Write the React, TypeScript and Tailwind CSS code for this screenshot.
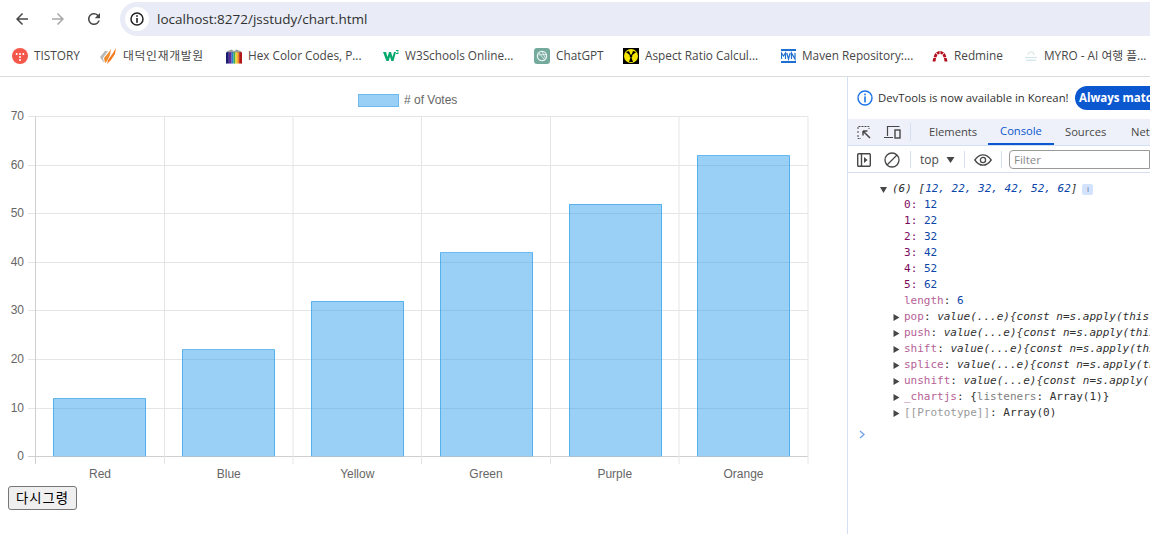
import React from 'react';

const ui = "font-['Open_Sans','Noto_Sans_CJK_KR',sans-serif]";

const NavIcon = ({ d, color }: { d: string; color: string }) => (
  <svg width="18" height="18" viewBox="0 0 24 24" fill={color}>
    <path d={d} />
  </svg>
);

const Tistory = () => (
  <svg width="16" height="16" viewBox="0 0 16 16">
    <circle cx="8" cy="8" r="8" fill="#f4584a" />
    <circle cx="4.7" cy="6" r="1" fill="#fff" />
    <circle cx="8" cy="6" r="1" fill="#fff" />
    <circle cx="11.3" cy="6" r="1" fill="#fff" />
    <circle cx="8" cy="9" r="1" fill="#fff" />
    <circle cx="8" cy="12" r="1" fill="#fff" />
  </svg>
);

const Daedeok = () => (
  <svg width="17" height="16" viewBox="0 0 17 16">
    <path d="M0 9 L5 3 L8 3 L3 10 L4 15 Z" fill="#b8b8b8" />
    <path d="M4 10 L9 4 L11 1 L10 7 L7 13 L5 15 Z" fill="#f08a2c" />
    <path d="M8 12 L13 5 L16 0 L15 6 L11 12 L7 16 Z" fill="#f47b20" />
  </svg>
);

const HexBook = () => (
  <svg width="16" height="17" viewBox="0 0 17 17">
    <path d="M1 3 L6 1 L8.5 3 L11 1 L16 3 L16 5 L1 5 Z" fill="#9aa0a0" />
    <rect x="0" y="4" width="3" height="12" fill="#1a1a6e" />
    <rect x="3" y="4" width="3" height="12" fill="#5b2a9d" />
    <rect x="6" y="4" width="2" height="12" fill="#2a7fd0" />
    <rect x="8" y="4" width="2" height="12" fill="#3cae4a" />
    <rect x="10" y="4" width="2" height="12" fill="#f2d32c" />
    <rect x="12" y="4" width="2" height="12" fill="#f08a24" />
    <rect x="14" y="4" width="3" height="12" fill="#b01818" />
  </svg>
);

const W3 = () => (
  <svg width="16" height="16" viewBox="0 0 16 16">
    <path d="M0 4 L3 4 L4.5 9 L6 4 L8 4 L9.5 9 L11 4 L13 4 L10.5 13 L8.3 13 L7 8.5 L5.7 13 L3.4 13 Z" fill="#04aa6d" />
    <rect x="13" y="2" width="2.5" height="1" fill="#04aa6d" />
    <rect x="14" y="3.5" width="1.5" height="1" fill="#04aa6d" />
    <rect x="13" y="5" width="2.5" height="1" fill="#04aa6d" />
  </svg>
);

const Gpt = () => (
  <svg width="16" height="16" viewBox="0 0 16 16">
    <rect width="16" height="16" rx="3" fill="#74aa9c" />
    <circle cx="8" cy="8" r="4.6" fill="none" stroke="#fff" strokeOpacity="0.85" strokeWidth="1.3" />
    <path d="M8 3.4 L11.5 10.5 M12.4 6.5 L4.6 6.8 M10.8 12 L5 5" stroke="#fff" strokeOpacity="0.7" strokeWidth="1" />
  </svg>
);

const Aspect = () => (
  <svg width="16" height="16" viewBox="0 0 16 16">
    <rect width="16" height="16" fill="#000" />
    <circle cx="8" cy="8" r="7" fill="#f6e500" />
    <circle cx="8" cy="8" r="1.4" fill="#000" />
    <path d="M8 8 L2.8 4 L6 3 Z M8 8 L13.2 4 L10 3 Z M8 8 L6 14 L10 14 Z" fill="#000" />
  </svg>
);

const Mvn = () => (
  <svg width="15" height="16" viewBox="0 0 15 16">
    <rect y="1" width="15" height="2" fill="#1f6fd0" />
    <rect y="13" width="15" height="2" fill="#1f6fd0" />
    <path d="M0.5 11 V5 L2.5 8 L4.5 5 V11 M5.8 5 L7.5 11 L9.2 5 M10.5 11 V5 L14 11 V5" fill="none" stroke="#1f6fd0" strokeWidth="1.2" />
  </svg>
);

const Redmine = () => (
  <svg width="16" height="16" viewBox="0 0 16 16">
    <path d="M0.5 13.5 H3.5 L4 10 H1.3 Z M1.6 9 L4.3 9.6 L5.5 7 L3.2 5 Z M4 4.4 L6 6.4 L7.6 6 V2.8 Z M8.4 2.8 V6 L10 6.4 L12 4.4 Z M12.8 5 L10.5 7 L11.7 9.6 L14.4 9 Z M14.7 10 H12 L12.5 13.5 H15.5 Z" fill="#b3101c" />
  </svg>
);

const Myro = () => (
  <svg width="14" height="14" viewBox="0 0 14 14">
    <path d="M4 6 A3 3 0 0 1 10 6" fill="none" stroke="#d8e6e4" strokeWidth="1.2" />
    <rect x="1" y="8" width="12" height="1" fill="#cfe4ea" />
    <rect x="2" y="10.5" width="10" height="1.5" fill="#d8e8ee" />
  </svg>
);

const bookmarks = [
  { icon: <Tistory />, label: 'TISTORY', box: 'ml-3 w-[88px]', text: '' },
  { icon: <Daedeok />, label: '대덕인재개발원', box: 'w-[126px]', text: 'tracking-[0.7px]' },
  { icon: <HexBook />, label: 'Hex Color Codes, P...', box: 'w-[157px]', text: '' },
  { icon: <W3 />, label: 'W3Schools Online...', box: 'w-[151px]', text: '' },
  { icon: <Gpt />, label: 'ChatGPT', box: 'w-[89px]', text: '' },
  { icon: <Aspect />, label: 'Aspect Ratio Calcul...', box: 'w-[158px]', text: '' },
  { icon: <Mvn />, label: 'Maven Repository:...', box: 'w-[151px]', text: '' },
  { icon: <Redmine />, label: 'Redmine', box: 'w-[92px]', text: '' },
  { icon: <Myro />, label: 'MYRO - AI 여행 플...', box: 'w-[126px]', text: '' },
];

const values = [12, 22, 32, 42, 52, 62];
const names = ['Red', 'Blue', 'Yellow', 'Green', 'Purple', 'Orange'];
const ticks = [0, 10, 20, 30, 40, 50, 60, 70];
const gridX = [35.5, 164.5, 293, 421.5, 550.5, 679, 808];
const barX = [53, 182, 311, 440, 569, 697];
const yOf = (v: number) => 456.7 - v * 4.857;

const Chart = () => (
  <svg width="847" height="408" viewBox="0 77 847 408" className="block font-['Liberation_Sans',sans-serif] text-[12px]">
    <rect x="358.5" y="94.5" width="40" height="12" fill="#9ad0f5" stroke="#6cbaf0" />
    <text x="404" y="104" fill="#666">
      # of Votes
    </text>
    {ticks.map((t) => (
      <g key={t}>
        <line x1="28" x2="808" y1={Math.floor(yOf(t)) + 0.5} y2={Math.floor(yOf(t)) + 0.5} stroke={t === 0 ? '#cfcfcf' : '#e5e5e5'} />
        <text x="24" y={yOf(t) + 3.5} textAnchor="end" fill="#666">
          {t}
        </text>
      </g>
    ))}
    {gridX.map((x, i) => (
      <line key={x} x1={x} x2={x} y1="116.5" y2="464" stroke={i === 0 ? '#cfcfcf' : '#e5e5e5'} />
    ))}
    {values.map((v, i) => (
      <g key={names[i]}>
        <rect x={barX[i]} y={yOf(v)} width="93" height={456.5 - yOf(v)} fill="rgba(54,162,235,0.5)" />
        <path
          d={`M${barX[i] + 0.5} 456 V${Math.floor(yOf(v)) + 0.5} H${barX[i] + 92.5} V456`}
          fill="none"
          stroke="rgba(54,162,235,0.7)"
        />
        <text x={(gridX[i] + gridX[i + 1]) / 2} y="478" textAnchor="middle" fill="#666">
          {names[i]}
        </text>
      </g>
    ))}
  </svg>
);

const Arrow = ({ open }: { open?: boolean }) => (
  <svg width="7" height="7" viewBox="0 0 7 7" className="shrink-0">
    <path d={open ? 'M0 1 H7 L3.5 7 Z' : 'M0.5 0 L6.5 3.5 L0.5 7 Z'} fill="#474747" />
  </svg>
);

const Row = ({ k, v }: { k: string; v: number }) => (
  <div className="h-4 pl-[56px] leading-4">
    <span className="text-[#7c0a5c]">{k}: </span>
    <span className="text-[#0b46a8]">{v}</span>
  </div>
);

const FnRow = ({ k }: { k: string }) => (
  <div className="flex h-4 items-center pl-[45px] leading-4">
    <Arrow />
    <span className="ml-1 shrink-0">
      <span className="text-[#b65f96]">{k}</span>
      <span className="text-[#303030]">: </span>
      <span className="italic text-[#303030]">value(...e){'{'}const n=s.apply(this,arguments);</span>
    </span>
  </div>
);

const DevTools = () => (
  <div className={`h-full w-[303px] overflow-hidden whitespace-nowrap border-l border-[#d3e0f3] ${ui}`}>
    <div className="flex h-[42px] items-center pl-[9px]">
      <svg width="16" height="16" viewBox="0 0 16 16" className="shrink-0">
        <circle cx="8" cy="8" r="7" fill="none" stroke="#1a73e8" strokeWidth="1.4" />
        <rect x="7.2" y="3.6" width="1.6" height="1.7" fill="#1a73e8" />
        <rect x="7.2" y="6.4" width="1.6" height="6" fill="#1a73e8" />
      </svg>
      <span className="ml-[5px] w-[192px] shrink-0 text-[11.3px] text-[#303030]">DevTools is now available in Korean!</span>
      <div className="ml-[5px] flex h-6 w-[90px] shrink-0 items-center rounded-l-full bg-[#0b57d0] pl-1 text-[11.5px] font-bold text-white">
        Always match
      </div>
    </div>
    <div className="flex h-[27px] items-stretch border-b border-[#d3e0f3] bg-[#eef1f9] pl-[9px] text-[11.2px] text-[#474747]">
      <div className="flex shrink-0 items-center gap-[12px]">
        <svg width="15" height="15" viewBox="0 0 15 15" fill="none" stroke="#474747">
          <path d="M1 4 V1.5 H12 V4 M1 6 V8 M1 10 V13.5 H4" strokeDasharray="2 1" />
          <path d="M6 6 L13 13 M6 6 H10.5 M6 6 V10.5" strokeWidth="1.5" />
        </svg>
        <svg width="17" height="15" viewBox="0 0 17 15" fill="none" stroke="#474747">
          <path d="M3.5 11 V1.5 H15.5 M0 12.5 H9" strokeWidth="1.2" />
          <rect x="11" y="5" width="5" height="8" strokeWidth="1.4" />
        </svg>
      </div>
      <div className="my-1 ml-[9px] w-px shrink-0 bg-[#d3e0f3]" />
      <div className="ml-[18px] flex w-[59px] shrink-0 items-center">Elements</div>
      <div className="flex w-[66px] shrink-0 items-center justify-center border-b-2 border-[#0b57d0] text-[#0b57d0]">Console</div>
      <div className="ml-[11px] flex w-[66px] shrink-0 items-center">Sources</div>
      <div className="flex shrink-0 items-center">Network</div>
    </div>
    <div className="flex h-[27px] items-center border-b border-[#d3e0f3] pl-[9px] pt-px text-[12px] text-[#474747]">
      <svg width="14" height="14" viewBox="0 0 14 14" fill="none" stroke="#474747" strokeWidth="1.4" className="shrink-0">
        <rect x="0.7" y="0.7" width="12.6" height="12.6" rx="1" />
        <path d="M4.5 1 V13" />
        <path d="M7 4 L10.5 7 L7 10 Z" fill="#474747" stroke="none" />
      </svg>
      <svg width="16" height="16" viewBox="0 0 16 16" fill="none" stroke="#474747" strokeWidth="1.3" className="ml-[13px] shrink-0">
        <circle cx="8" cy="8" r="7" />
        <path d="M3 13 L13 3" />
      </svg>
      <div className="ml-[10px] h-[17px] w-px shrink-0 bg-[#d3e0f3]" />
      <span className="ml-[9px] w-[18px] shrink-0">top</span>
      <svg width="9" height="6" viewBox="0 0 9 6" className="ml-[8px] shrink-0">
        <path d="M0.5 0 H8.5 L4.5 6 Z" fill="#474747" />
      </svg>
      <div className="ml-[9px] h-[17px] w-px shrink-0 bg-[#d3e0f3]" />
      <svg width="18" height="12" viewBox="0 0 18 12" fill="none" stroke="#474747" strokeWidth="1.3" className="ml-[9px] shrink-0">
        <path d="M0.8 6 C4 1.5 6.5 0.8 9 0.8 C11.5 0.8 14 1.5 17.2 6 C14 10.5 11.5 11.2 9 11.2 C6.5 11.2 4 10.5 0.8 6 Z" />
        <circle cx="9" cy="6" r="2.6" />
      </svg>
      <div className="ml-[9px] h-[17px] w-px shrink-0 bg-[#d3e0f3]" />
      <div className="ml-[7px] flex h-[19px] flex-1 items-center rounded-l-[4px] border border-[#9a9a9a] pl-1 text-[11.5px] text-[#8a8a8a]">Filter</div>
    </div>
    <div className="pt-2 font-['DejaVu_Sans_Mono',monospace] text-[11px]">
      <div className="flex h-4 items-center pl-[32px] leading-4">
        <Arrow open />
        <span className="ml-[5px] shrink-0 italic text-[#303030]">
          (6) [<span className="text-[#0b46a8]">12, 22, 32, 42, 52, 62</span>]
        </span>
        <span className={`ml-[5px] flex h-[11px] w-[11px] shrink-0 items-center justify-center rounded-[2px] bg-[#d3e3fd] text-[8px] text-[#5a6a8a] ${ui}`}>i</span>
      </div>
      {values.map((v, i) => (
        <Row key={i} k={String(i)} v={v} />
      ))}
      <div className="h-4 pl-[56px] leading-4">
        <span className="text-[#b65f96]">length</span>
        <span className="text-[#303030]">: </span>
        <span className="text-[#0b46a8]">6</span>
      </div>
      {['pop', 'push', 'shift', 'splice', 'unshift'].map((k) => (
        <FnRow key={k} k={k} />
      ))}
      <div className="flex h-4 items-center pl-[45px] leading-4">
        <Arrow />
        <span className="ml-1 shrink-0 text-[#303030]">
          <span className="text-[#b65f96]">_chartjs</span>: {'{'}<span className="text-[#808080]">listeners</span>: Array(1){'}'}
        </span>
      </div>
      <div className="flex h-4 items-center pl-[45px] leading-4">
        <Arrow />
        <span className="ml-1 shrink-0 text-[#303030]">
          <span className="text-[#9a9a9a]">[[Prototype]]</span>: Array(0)
        </span>
      </div>
      <div className="pl-[11px] pt-[9px]">
        <svg width="7" height="9" viewBox="0 0 7 9" fill="none" stroke="#6f9fe8" strokeWidth="1.3">
          <path d="M1 1 L5 4.5 L1 8" />
        </svg>
      </div>
    </div>
  </div>
);

export default function App() {
  return (
    <div className="flex h-[534px] w-[1150px] flex-col overflow-hidden bg-white">
      <div className="flex h-9 items-end">
        <div className="flex h-[34px] w-[120px] items-center pl-[13px]">
          <NavIcon color="#474747" d="M20 11H7.83l5.59-5.59L12 4l-8 8 8 8 1.41-1.41L7.83 13H20v-2z" />
          <div className="ml-[18px]">
            <NavIcon color="#a8a8a8" d="M4 11h12.17l-5.59-5.59L12 4l8 8-8 8-1.41-1.41L16.17 13H4v-2z" />
          </div>
          <div className="ml-[18px]">
            <NavIcon
              color="#474747"
              d="M17.65 6.35A7.958 7.958 0 0 0 12 4c-4.42 0-7.99 3.58-7.99 8s3.57 8 7.99 8c3.73 0 6.84-2.55 7.73-6h-2.08A5.99 5.99 0 0 1 12 18c-3.31 0-6-2.69-6-6s2.69-6 6-6c1.66 0 3.14.69 4.22 1.78L13 11h7V4l-2.35 2.35z"
            />
          </div>
        </div>
        <div className={`flex h-[34px] flex-1 items-center rounded-l-full bg-[#e9ecf6] pl-[5px] ${ui}`}>
          <div className="flex h-6 w-6 items-center justify-center rounded-full bg-white">
            <svg width="14" height="14" viewBox="0 0 14 14">
              <circle cx="7" cy="7" r="6" fill="none" stroke="#222" strokeWidth="1.5" />
              <rect x="6.2" y="3.2" width="1.6" height="1.6" fill="#222" />
              <rect x="6.2" y="6" width="1.6" height="4.8" fill="#222" />
            </svg>
          </div>
          <span className="ml-[8px] text-[13.5px] text-[#303030]">localhost:8272/jsstudy/chart.html</span>
        </div>
      </div>
      <div className={`flex h-[41px] items-center overflow-hidden whitespace-nowrap border-b border-[#dcdcdc] text-[11.8px] text-[#474747] ${ui}`}>
        {bookmarks.map((b) => (
          <div key={b.label} className={`flex shrink-0 items-center gap-[6px] ${b.box}`}>
            {b.icon}
            <span className={b.text}>{b.label}</span>
          </div>
        ))}
      </div>
      <div className="flex min-h-0 flex-1">
        <div className="w-[847px] shrink-0">
          <Chart />
          <button className="ml-2 h-6 w-[69px] rounded-[3px] border border-[#767676] bg-[#efefef] font-['Noto_Sans_CJK_KR',sans-serif] text-[13.33px] leading-none tracking-[1px] text-black">
            다시그령
          </button>
        </div>
        <DevTools />
      </div>
    </div>
  );
}
